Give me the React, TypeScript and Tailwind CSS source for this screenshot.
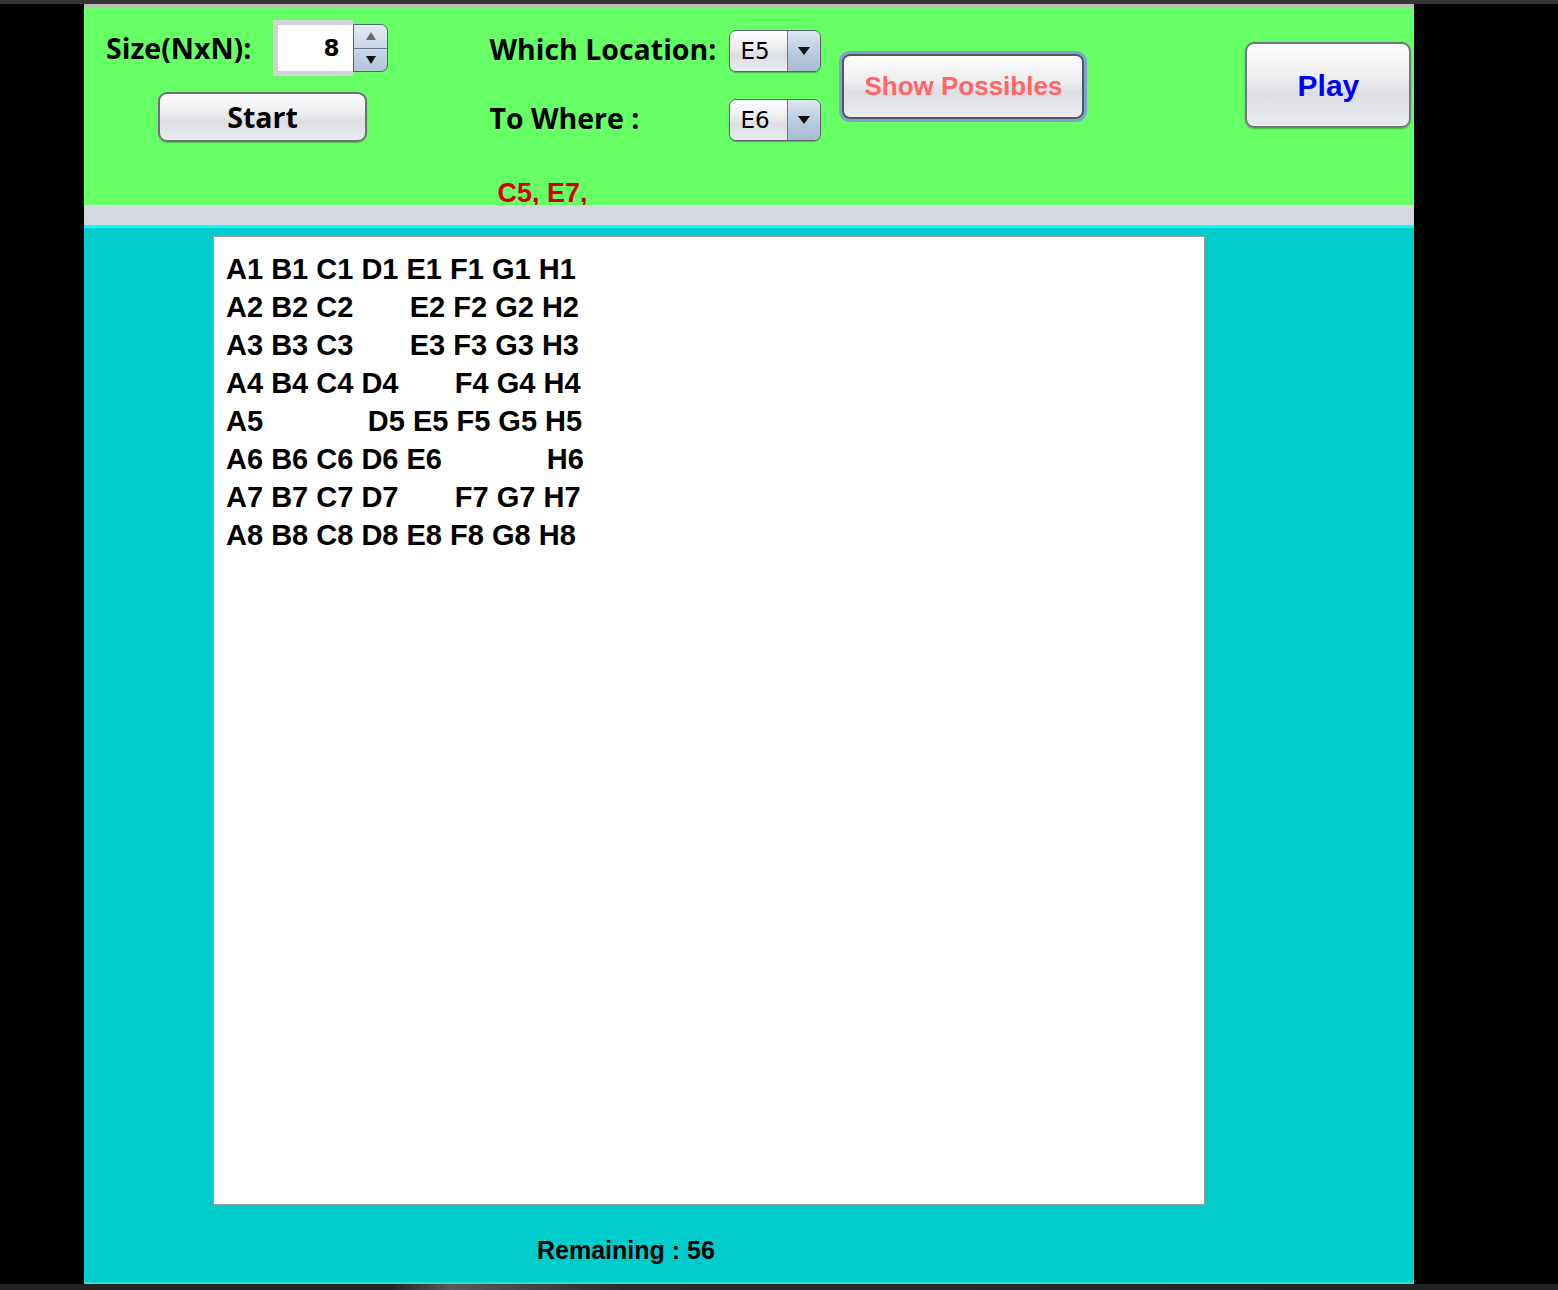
import React from "react";

const aqua =
  "bg-[linear-gradient(to_bottom,#fdfdfe_0%,#eeeef1_40%,#dcdee3_60%,#e9ebf0_100%)]";

function Combo({ value }: { value: string }) {
  return (
    <div className="flex h-[42px] w-[92px] overflow-hidden rounded-[7px] border border-[#5e6470] shadow-[0_1px_1px_rgba(0,0,0,0.3)]">
      <div
        className={`flex flex-1 items-center pl-[10px] text-[23px] text-black ${aqua}`}
        style={{ fontFamily: '"DejaVu Sans", sans-serif' }}
      >
        {value}
      </div>
      <div className="flex w-[33px] items-center justify-center border-l border-[#6b7a8e] bg-[linear-gradient(to_bottom,#dfe7f1,#b9c9dc_55%,#a7bbd2)]">
        <svg width="12" height="10" viewBox="0 0 12 10">
          <path d="M0 1 H12 L6 9 Z" fill="#111" />
        </svg>
      </div>
    </div>
  );
}

export default function App() {
  const rows = [
    "A1 B1 C1 D1 E1 F1 G1 H1",
    "A2 B2 C2       E2 F2 G2 H2",
    "A3 B3 C3       E3 F3 G3 H3",
    "A4 B4 C4 D4       F4 G4 H4",
    "A5             D5 E5 F5 G5 H5",
    "A6 B6 C6 D6 E6             H6",
    "A7 B7 C7 D7       F7 G7 H7",
    "A8 B8 C8 D8 E8 F8 G8 H8",
  ];
  const label = { fontFamily: '"Open Sans", "DejaVu Sans", sans-serif' };
  const helv = { fontFamily: '"Liberation Sans", Arial, sans-serif' };

  return (
    <div className="flex h-[1290px] w-[1558px] flex-col bg-black">
      <div className="h-[4px] w-full bg-[#353535]" />
      <div className="flex flex-1">
        <div className="w-[84px] bg-black" />
        <div className="flex w-[1330px] flex-col">
          <div className="h-[3px] bg-[#bdbdc2]" />
          {/* green control panel */}
          <div className="flex h-[198px] overflow-hidden bg-[#66ff66]">
            {/* column 1 */}
            <div className="flex flex-col pl-[22px]">
              <div className="mt-[13px] flex items-center">
                <span className="text-[28.5px] font-bold text-black" style={label}>
                  Size(NxN):
                </span>
                <div className="ml-[22px] flex items-center">
                  <div className="flex h-[56px] w-[80px] items-center justify-end border-y-[5px] border-l-[5px] border-[#d2d3d6] bg-white pr-[14px]">
                    <span
                      className="text-[23px] font-bold text-black"
                      style={{ fontFamily: '"DejaVu Sans", sans-serif' }}
                    >
                      8
                    </span>
                  </div>
                  <div className="flex h-[48px] w-[35px] flex-col overflow-hidden rounded-r-[7px] border border-[#55647a] bg-[linear-gradient(to_bottom,#e4eaf2,#b3c4d9)]">
                    <div className="flex flex-1 items-center justify-center border-b border-[#6c7b90]">
                      <svg width="10" height="8" viewBox="0 0 10 8">
                        <path d="M5 0 L10 8 H0 Z" fill="#6a6a6a" />
                      </svg>
                    </div>
                    <div className="flex flex-1 items-center justify-center">
                      <svg width="10" height="8" viewBox="0 0 10 8">
                        <path d="M0 0 H10 L5 8 Z" fill="#111" />
                      </svg>
                    </div>
                  </div>
                </div>
              </div>
              <button
                className={`ml-[52px] mt-[16px] flex h-[50px] w-[209px] items-center justify-center rounded-[9px] border-[2px] border-[#6f7076] text-[28.5px] font-bold text-black shadow-[0_1px_1px_rgba(0,0,0,0.25)] ${aqua}`}
                style={label}
              >
                Start
              </button>
            </div>
            {/* column 2 */}
            <div className="ml-[101px] flex flex-col">
              <div className="mt-[23px] flex h-[42px] items-center">
                <span
                  className="mb-[4px] w-[240px] text-[28.5px] font-bold leading-[38px] text-black"
                  style={label}
                >
                  Which Location:
                </span>
                <Combo value="E5" />
              </div>
              <div className="mt-[27px] flex h-[42px] items-center">
                <span
                  className="mb-[4px] w-[240px] text-[28.5px] font-bold leading-[38px] text-black"
                  style={label}
                >
                  To Where&nbsp;:
                </span>
                <Combo value="E6" />
              </div>
              <div
                className="ml-[8px] mt-[36px] text-[27px] font-bold leading-[32px] text-[#d40000]"
                style={helv}
              >
                C5, E7,
              </div>
            </div>
            {/* column 3 */}
            <div className="ml-[18px] mt-[44px]">
              <div className="rounded-[11px] border-[3px] border-[#7fa0d2]">
                <button
                  className={`flex h-[65px] w-[242px] items-center justify-center rounded-[8px] border-[2px] border-[#55575e] text-[26px] font-bold text-[#ff6666] ${aqua}`}
                  style={helv}
                >
                  Show Possibles
                </button>
              </div>
            </div>
            {/* column 4 */}
            <div className="ml-[158px] mt-[35px]">
              <button
                className={`flex h-[86px] w-[166px] items-center justify-center rounded-[9px] border-[2px] border-[#76777c] text-[30px] font-bold text-[#0000ff] shadow-[0_1px_2px_rgba(0,0,0,0.3)] ${aqua}`}
                style={helv}
              >
                Play
              </button>
            </div>
          </div>
          <div className="h-[20px] bg-[#d6d9e0]" />
          <div className="h-[3px] bg-[#00ffff]" />
          {/* teal content */}
          <div className="flex flex-1 flex-col bg-[#00cccc]">
            <div className="ml-[129px] mt-[8px] h-[969px] w-[992px] border border-[#9a9aa2] bg-white pl-[12px] pt-[13px]">
              {rows.map((r, i) => (
                <div
                  key={i}
                  className="whitespace-pre text-[29px] font-bold leading-[38px] text-black"
                  style={helv}
                >
                  {r}
                </div>
              ))}
            </div>
            <div
              className="ml-[453px] mt-[30px] text-[25px] font-bold leading-[30px] text-black"
              style={helv}
            >
              Remaining : 56
            </div>
          </div>
          <div className="h-[2px] bg-[#33dddd]" />
        </div>
        <div className="flex-1 bg-black" />
      </div>
      <div className="h-[6px] w-full bg-[linear-gradient(to_right,#232323_0%,#232323_25%,#5a5a5a_29%,#2a2a2a_40%,#232323_100%)]" />
    </div>
  );
}
